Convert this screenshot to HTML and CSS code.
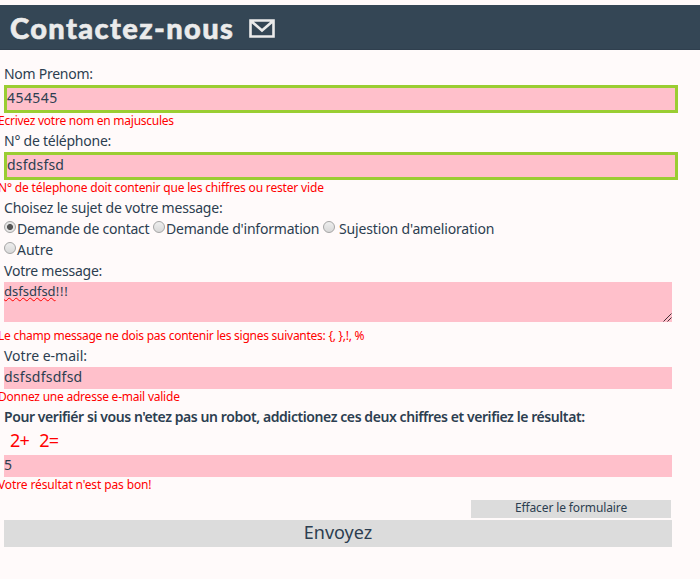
FILE: index.html
```html
<!DOCTYPE html>
<html lang="fr">
<head>
<meta charset="utf-8">
<title>Contactez-nous</title>
<link rel="stylesheet" href="styles.css">
</head>
<body>
<header class="banner">
  <h1 class="title">Contactez-nous</h1>
  <svg class="mail" width="26" height="19" viewBox="0 0 26 19"><path d="M1.5 1.5H24.5V17.5H1.5ZM2 2L13 11.5L24 2" fill="none" stroke="#ebebeb" stroke-width="2.6"/></svg>
</header>
<form class="form">
  <div class="label"><span class="t-name">Nom Prenom:</span></div>
  <div class="field outlined"><span class="v-name">454545</span></div>
  <div class="error"><span class="e-name">Ecrivez votre nom en majuscules</span></div>
  <div class="label"><span class="t-phone">N° de téléphone:</span></div>
  <div class="field outlined"><span class="v-phone">dsfdsfsd</span></div>
  <div class="error"><span class="e-phone">N° de télephone doit contenir que les chiffres ou rester vide</span></div>
  <div class="label"><span class="t-subject">Choisez le sujet de votre message:</span></div>
  <div class="choices">
    <i class="radio checked"></i><span class="choice contact">Demande de contact</span>
    <i class="radio"></i><span class="choice info">Demande d'information</span>
    <i class="radio"></i><span class="choice suggestion">Sujestion d'amelioration</span>
  </div>
  <div class="choices"><i class="radio"></i><span class="choice other">Autre</span></div>
  <div class="label"><span class="t-message">Votre message:</span></div>
  <div class="message"><span class="misspelled">dsfsdfsd</span><span class="marks">!!!</span>
    <svg class="grip" width="9" height="9" viewBox="0 0 9 9"><path d="M.5 8.5L8.5 .5M4.5 8.5L8.5 4.5" fill="none" stroke="#443238"/></svg>
  </div>
  <div class="error"><span class="e-message">Le champ message ne dois pas contenir les signes suivantes: {, },!, %</span></div>
  <div class="label"><span class="t-email">Votre e-mail:</span></div>
  <div class="field"><span class="v-email">dsfsdfsdfsd</span></div>
  <div class="error"><span class="e-email">Donnez une adresse e-mail valide</span></div>
  <div class="label strong"><span class="t-robot">Pour verifiér si vous n'etez pas un robot, addictionez ces deux chiffres et verifiez le résultat:</span></div>
  <div class="sum"><span>2+</span><span>2=</span></div>
  <div class="field"><span>5</span></div>
  <div class="error"><span class="e-sum">Votre résultat n'est pas bon!</span></div>
  <button class="reset" type="button">Effacer le formulaire</button>
  <button class="submit" type="button">Envoyez</button>
</form>
</body>
</html>
```
FILE: styles.css
```css
body {
  margin: 0;
  padding-top: 5px;
  min-height: 574px;
  box-sizing: border-box;
  overflow: hidden;
  background: #fffafa;
  color: #2c3e50;
  font-family: "Noto Sans", sans-serif;
  font-size: 14px;
  white-space: nowrap;
}
.banner {
  display: flex;
  align-items: center;
  height: 45px;
  box-sizing: border-box;
  padding: 2px 0 0 10px;
  gap: 15px;
  background: #344655;
  border-bottom: 1px solid #2f3f4e;
  color: #ebebeb;
}
.title {
  margin: 0;
  width: 224px;
  font: 900 29px/44px Lato, sans-serif;
  letter-spacing: 1.4px;
  -webkit-text-stroke: .6px #ebebeb;
}
.form { display: flex; flex-direction: column; margin: 14px 28px 0 4px; }
.label, .choices { height: 21px; line-height: 19px; }
.strong { font-weight: 600; line-height: 20px; }
.field {
  height: 22px;
  line-height: 19px;
  background: #ffc0cb;
}
.outlined { width: 668px; border: 3px solid #9acd32; }
.error {
  height: 18px;
  margin-left: -6px;
  line-height: 16px;
  font-size: 12px;
  color: #f00;
}
.t-name { letter-spacing: -.27px; }
.v-name { letter-spacing: .45px; }
.e-name { letter-spacing: -.25px; }
.t-phone { letter-spacing: -.24px; }
.v-phone { letter-spacing: .2px; }
.e-phone { letter-spacing: -.17px; }
.t-subject { letter-spacing: -.2px; }
.t-message { letter-spacing: -.22px; }
.e-message { letter-spacing: -.26px; }
.v-email { letter-spacing: .25px; }
.e-email { letter-spacing: -.23px; }
.t-robot { letter-spacing: -.42px; }
.e-sum { letter-spacing: -.12px; }
.choices { display: flex; }
.radio {
  width: 10px;
  height: 10px;
  margin: 2px 1px 0 0;
  flex: none;
  border: 1px solid #a5a5a5;
  border-radius: 50%;
  background: linear-gradient(#eee, #d8d8d8);
}
.checked { background: radial-gradient(circle, #555 0 2.6px, #e4e4e4 3.4px); }
.contact { width: 136px; letter-spacing: -.23px; }
.info { width: 157px; letter-spacing: -.21px; }
.suggestion { margin-left: 3px; letter-spacing: -.15px; }
.message {
  position: relative;
  height: 40px;
  margin-bottom: 5px;
  background: #ffc0cb;
  font-size: 13px;
  line-height: 19px;
}
.misspelled {
  text-decoration: underline wavy #f00 1px;
  text-decoration-skip-ink: none;
}
.marks { letter-spacing: .8px; }
.grip { position: absolute; right: 0; bottom: 0; }
.message + .error { height: 19px; line-height: 17px; }
.sum {
  display: flex;
  gap: 10px;
  height: 27px;
  padding-left: 6px;
  line-height: 25px;
  font-size: 18px;
  letter-spacing: -.7px;
  color: #f00;
}
button {
  padding: 0;
  border: 0;
  background: #dcdcdc;
  color: #2c3e50;
  font-family: inherit;
}
.reset {
  align-self: flex-end;
  width: 200px;
  height: 18px;
  margin: 5px 1px 2px 0;
  padding-bottom: 2px;
  font-size: 12px;
  line-height: 16px;
  letter-spacing: -.12px;
}
.submit { height: 27px; padding-bottom: 3px; font-size: 18px; line-height: 24px; }
```
